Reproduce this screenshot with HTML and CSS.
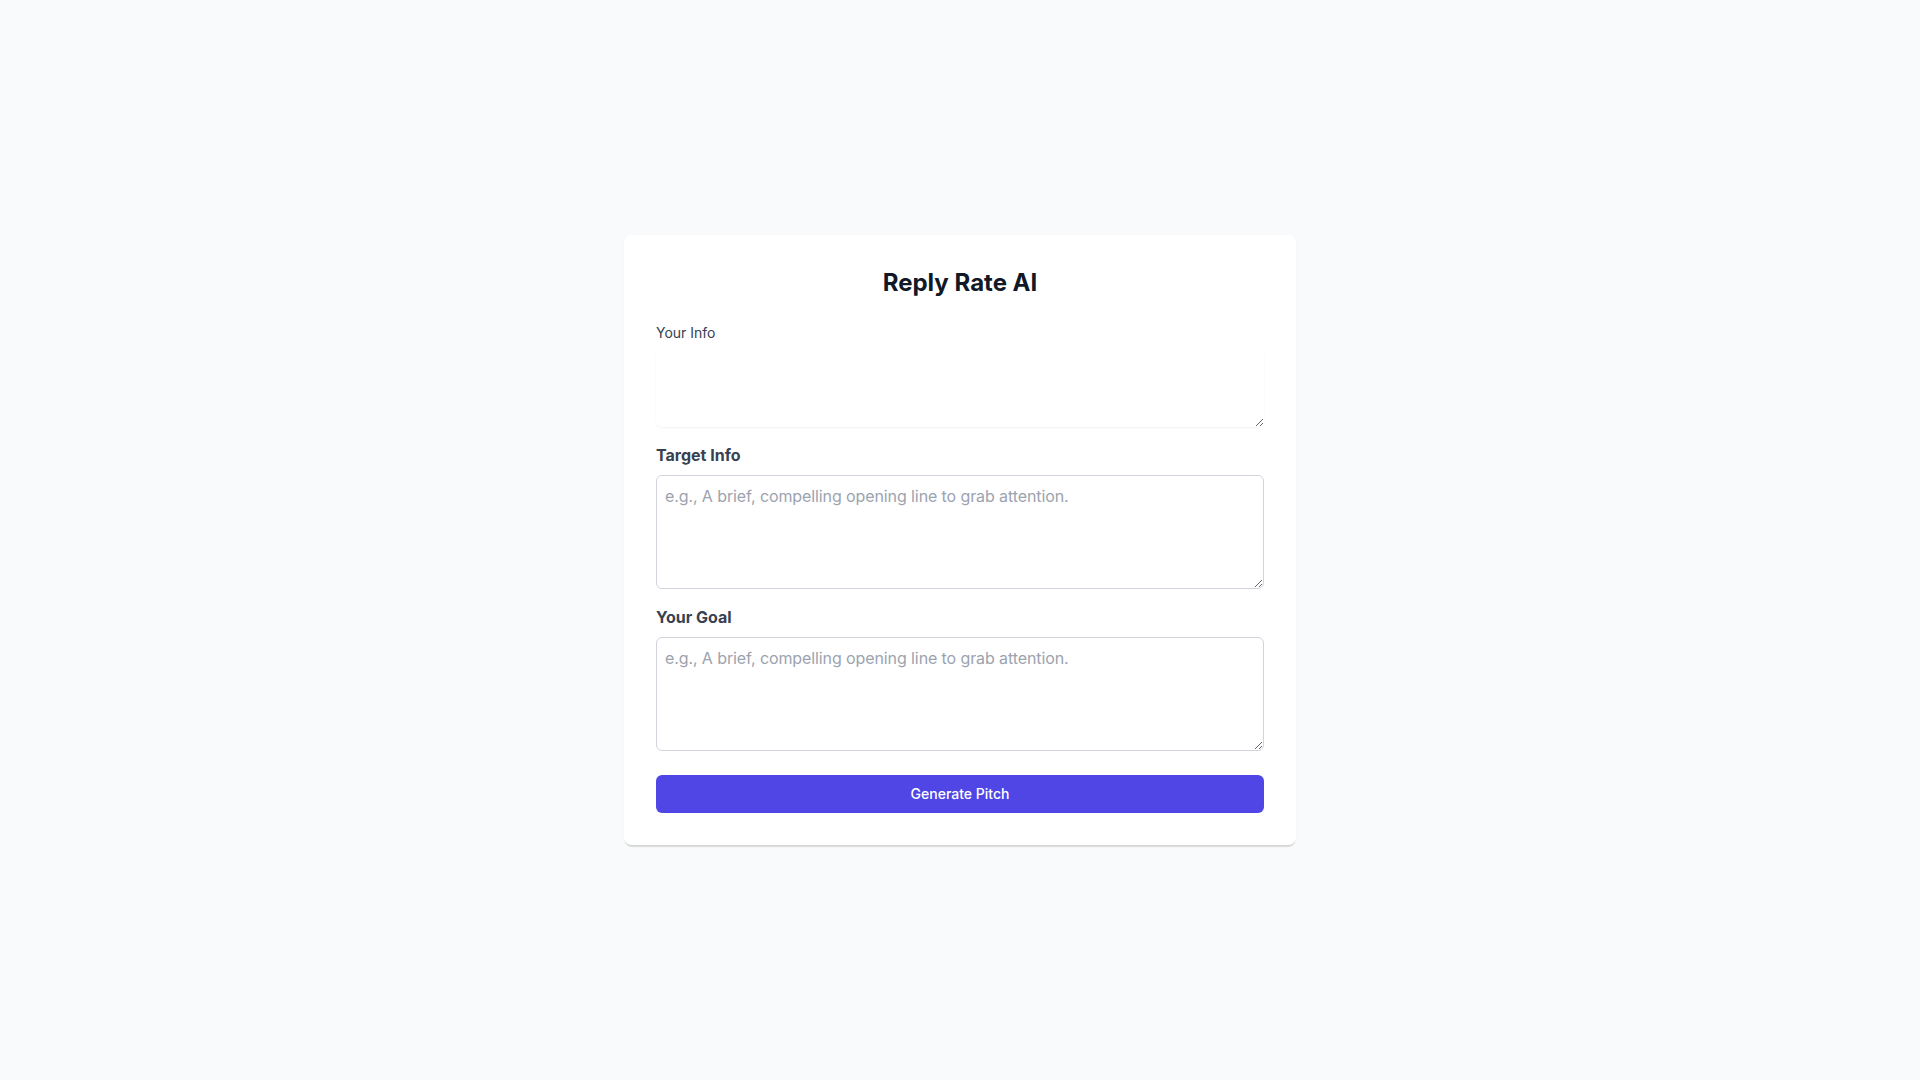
FILE: index.html
```html
<!DOCTYPE html>
<html>
<head>
    <title>Reply Rate AI</title>
    <meta charset="UTF-8">
    <meta name="viewport" content="width=device-width, initial-scale=1.0">
    <link rel="stylesheet" href="styles.css">
</head>
<body class="page">
    <main class="wrap">
        <form class="card">
            <h1 class="title">Reply Rate AI</h1>

            <div class="field">
                <label class="label-plain" for="your-info">Your Info</label>
                <textarea id="your-info" class="box box-plain"></textarea>
            </div>

            <div class="field">
                <label class="label" for="target-info">Target Info</label>
                <textarea id="target-info" class="box" rows="4" placeholder="e.g., A brief, compelling opening line to grab attention."></textarea>
            </div>

            <div class="field">
                <label class="label" for="your-goal">Your Goal</label>
                <textarea id="your-goal" class="box" rows="4" placeholder="e.g., A brief, compelling opening line to grab attention."></textarea>
            </div>

            <button type="button" class="btn">Generate Pitch</button>
        </form>
    </main>
</body>
</html>
```

FILE: styles.css
```css
* {
box-sizing: border-box;
}

.page {
margin: 0;
background: #f9fafb;
font-family: Inter, "Noto Sans", sans-serif;
color: #111827;
}

.wrap {
min-height: 100vh;
display: flex;
align-items: center;
justify-content: center;
}

.card {
width: 672px;
background: #ffffff;
border-radius: 8px;
padding: 32px;
box-shadow: 0 3px 1px -1px rgba(0, 0, 0, 0.12), 0 1px 3px rgba(0, 0, 0, 0.04);
}

.title {
margin: 0 0 24px;
text-align: center;
font-size: 24px;
line-height: 32px;
font-weight: 700;
color: #111827;
}

.field {
margin-bottom: 16px;
}

.label-plain {
display: block;
font-size: 14px;
line-height: 20px;
font-weight: 400;
color: #374151;
margin-bottom: 4px;
}

.label {
display: block;
font-size: 16px;
line-height: 24px;
font-weight: 700;
color: #374151;
margin-bottom: 8px;
}

.box {
display: block;
width: 100%;
margin: 0;
padding: 8px;
border: 1px solid #d1d5db;
border-radius: 6px;
font-family: inherit;
font-size: 16px;
line-height: 24px;
color: #111827;
background: #ffffff;
height: 114px;
}

.box::placeholder {
color: #9ca3af;
letter-spacing: -0.1px;
}

.box-plain {
border: none;
height: 80px;
box-shadow: 0 1px 2px 0 rgba(0, 0, 0, 0.05);
}

.btn {
display: block;
width: 100%;
margin-top: 24px;
padding: 9px 16px;
border: none;
border-radius: 6px;
background: #4f46e5;
color: #ffffff;
font-family: inherit;
font-size: 14px;
line-height: 20px;
font-weight: 500;
cursor: pointer;
}
```
